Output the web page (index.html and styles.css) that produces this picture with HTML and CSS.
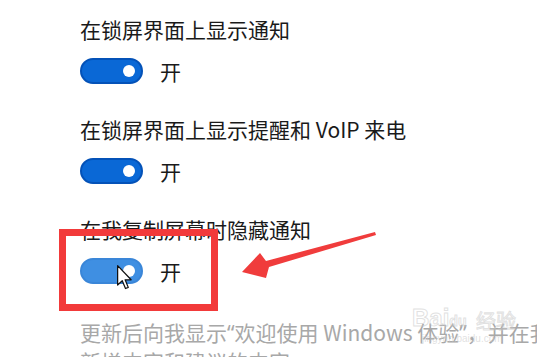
FILE: index.html
```html
<!DOCTYPE html>
<html lang="zh-CN">
<head>
<meta charset="utf-8">
<link rel="stylesheet" href="styles.css">
</head>
<body>
<div class="page">
  <section class="setting">
    <div class="label">在锁屏界面上显示通知</div>
    <div class="row">
      <span class="toggle"><span class="knob"></span></span>
      <span class="state">开</span>
    </div>
  </section>
  <section class="setting">
    <div class="label">在锁屏界面上显示提醒和 VoIP 来电</div>
    <div class="row">
      <span class="toggle"><span class="knob"></span></span>
      <span class="state">开</span>
    </div>
  </section>
  <section class="setting">
    <div class="label">在我复制屏幕时隐藏通知</div>
    <div class="row">
      <span class="toggle hover"><span class="knob"></span>
        <svg class="cursor" width="15" height="27" viewBox="0 0 12 20">
          <path d="M0.5 0.5 L0.5 16 L4.2 12.6 L6.8 18.8 L9 17.9 L6.5 11.8 L11.3 11.8 Z" fill="#fff" stroke="#111" stroke-width="1" stroke-linejoin="round"/>
        </svg>
      </span>
      <span class="state">开</span>
    </div>
  </section>
  <p class="desc"><span class="line">更新后向我显示<span class="q">“</span>欢迎使用 Windows 体验<span class="q">”</span>，并在我登录时突出显示</span><span class="line">新增内容和建议的内容</span></p>

  <div class="highlight"></div>
  <svg class="arrow" width="140" height="50" viewBox="0 0 140 50">
    <polygon points="2,40 20,21 26,29 135,0 136,3 29,35 26,46" fill="#f03c3c"/>
  </svg>
  <div class="watermark" aria-hidden="true"><span class="wm-big">Bai<span class="paw">du</span></span><span class="wm-cn">经验</span><span class="wm-url">jingyan.baidu.com</span></div>
</div>
</body>
</html>
```
FILE: styles.css
```css
html, body {
  margin: 0;
  padding: 0;
  background: #fff;
}
body {
  font-family: "Noto Sans CJK SC", "Noto Sans", sans-serif;
  color: #1a1a1a;
  width: 537px;
  height: 357px;
  overflow: hidden;
}
.page {
  position: relative;
  padding: 15px 0 0 80px;
  height: 342px;
  overflow: hidden;
}
.setting {
  height: 100px;
}
.label {
  font-size: 21px;
  line-height: 28px;
  white-space: nowrap;
}
.row {
  margin-top: 15px;
  display: flex;
  align-items: center;
  gap: 17px;
  height: 26px;
}
.toggle {
  position: relative;
  box-sizing: border-box;
  width: 63px;
  height: 26px;
  border-radius: 13px;
  background: #0a68d6;
  border: 2px solid #0452b8;
  display: flex;
  align-items: center;
  justify-content: flex-end;
  padding-right: 6px;
}
.toggle.hover {
  background: #3f8fe2;
  border-color: #3a86d8;
}
.knob {
  width: 12px;
  height: 12px;
  border-radius: 50%;
  background: #fff;
}
.cursor {
  position: absolute;
  left: 35px;
  top: 4px;
}
.state {
  font-size: 21px;
  line-height: 26px;
  color: #1a1a1a;
}
.desc {
  margin: 3px 0 0 0;
  font-size: 21px;
  line-height: 28px;
  color: #a8a8a8;
}
.q {
  font-family: "Noto Sans", sans-serif;
}
.line {
  display: block;
  white-space: nowrap;
}
.highlight {
  position: absolute;
  left: 59px;
  top: 229px;
  width: 159px;
  height: 82px;
  box-sizing: border-box;
  border: 7px solid #f23a3a;
}
.arrow {
  position: absolute;
  left: 240px;
  top: 232px;
}
.watermark {
  position: absolute;
  left: 412px;
  top: 300px;
  width: 125px;
  height: 50px;
  font-family: "Liberation Sans", sans-serif;
  pointer-events: none;
}
.wm-big {
  position: absolute;
  left: 0;
  top: 4px;
  font-size: 24px;
  font-weight: bold;
  color: transparent;
  -webkit-text-stroke: 1px rgba(200, 200, 200, 0.55);
}
.paw {
  font-size: 14px;
}
.wm-cn {
  position: absolute;
  left: 64px;
  top: 6px;
  font-size: 20px;
  font-family: "Noto Sans CJK SC", sans-serif;
  color: transparent;
  -webkit-text-stroke: 1px rgba(200, 200, 200, 0.55);
}
.wm-url {
  position: absolute;
  left: 10px;
  top: 33px;
  font-size: 10px;
  color: rgba(200, 200, 200, 0.55);
}
```
